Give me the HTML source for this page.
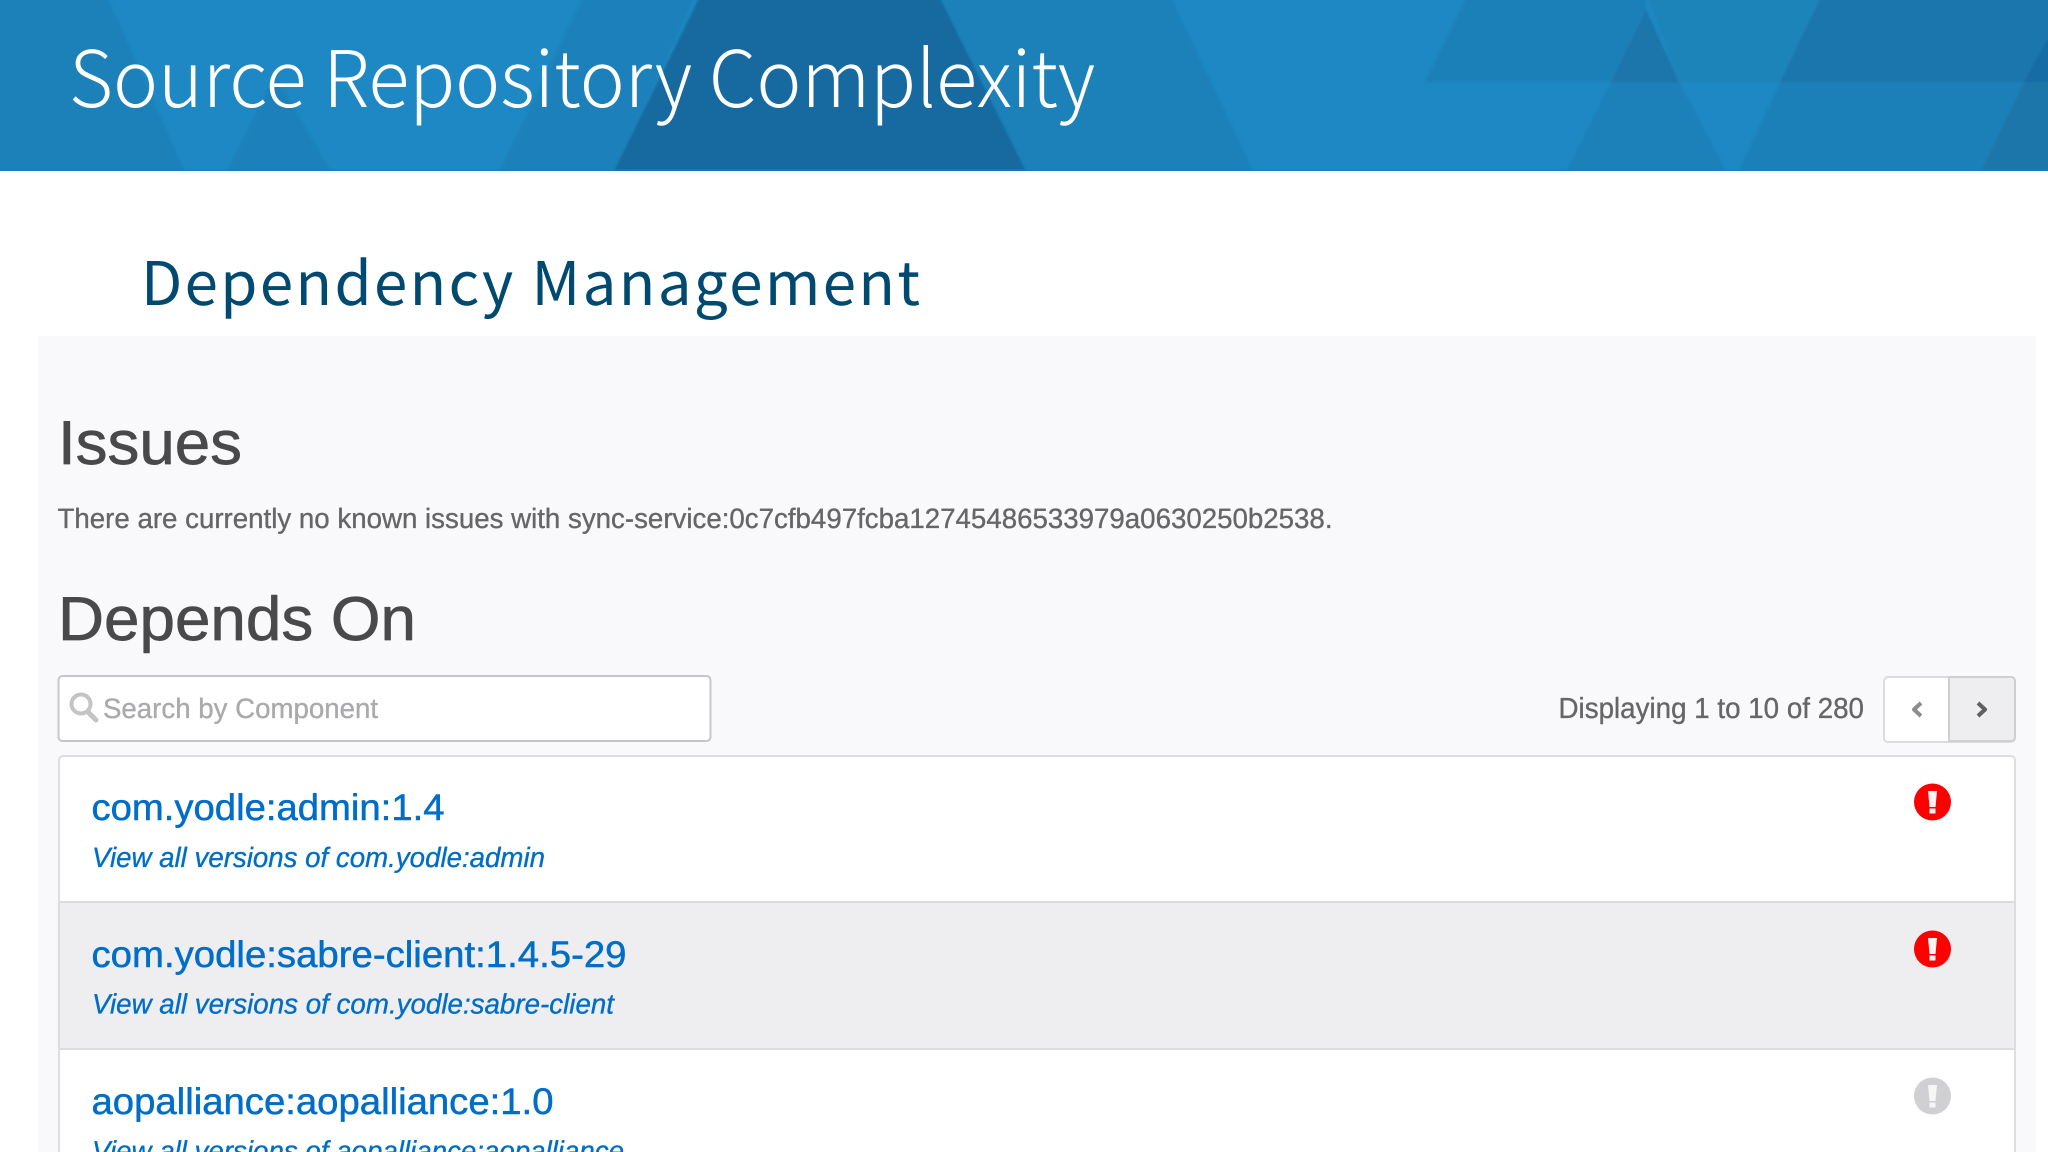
<!DOCTYPE html>
<html lang="en">
<head>
<meta charset="utf-8">
<title>Source Repository Complexity</title>
<style>
html,body{margin:0;padding:0;background:#fff;width:2048px;height:1152px;overflow:hidden}
svg{display:block;position:absolute;left:0;top:0}
text{text-rendering:geometricPrecision;white-space:pre}
.lib{font-family:"Liberation Sans",Arial,sans-serif}
.noto{font-family:"Noto Sans CJK JP","Liberation Sans",sans-serif}
</style>
</head>
<body>
<svg width="2048" height="1152" viewBox="0 0 2048 1152" xmlns="http://www.w3.org/2000/svg">
  <defs>
    <filter id="soft" filterUnits="userSpaceOnUse" x="-20" y="-20" width="2100" height="1200"><feGaussianBlur stdDeviation="1"/></filter>
    <filter id="txt" filterUnits="userSpaceOnUse" x="0" y="0" width="2048" height="1200"><feGaussianBlur stdDeviation="0.3"/></filter>
    <clipPath id="hd"><rect x="0" y="0" width="2048" height="171"/></clipPath>
  </defs>
  <!-- header -->
  <rect x="0" y="0" width="2048" height="171" fill="#1d88c3"/>
  <g clip-path="url(#hd)"><g filter="url(#soft)">
  <polygon points="-10,-10 104,-10 186,175 -10,175" fill="#1b80b9"/>
  <polygon points="225,175 275,75 333,175" fill="#1c81ba"/>
  <polygon points="586,-10 698,-10 614,175 498,175" fill="#1b81ba"/>
  <polygon points="703,-10 936,-10 1028,175 612,175" fill="#176ba0"/>
  <polygon points="936,-10 1167,-10 1255,175 1028,175" fill="#1b80b9"/>
  <polygon points="1470,-10 1646,-10 1646,10 1611,82 1425,82" fill="#1c80b8"/>
  <polygon points="1646,10 1679,82 1611,82" fill="#1a74ab"/>
  <polygon points="1611,82 1679,82 1728,175 1565,175" fill="#1b80b9"/>
  <polygon points="1645,-10 1824,-10 1780,82 1679,82" fill="#1a84b9"/>
  <polygon points="1824,-10 2058,-10 2058,20 2024,82 1780,82" fill="#1a76ae"/>
  <polygon points="2058,20 2058,82 2024,82" fill="#186ca4"/>
  <polygon points="1780,82 2024,82 1979,175 1737,175" fill="#1b80b8"/>
  <polygon points="2024,82 2058,82 2058,175 1979,175" fill="#1a76a9"/>
  </g></g>
  <rect x="0" y="169" width="2048" height="2" fill="#1c7fb0" opacity=".6"/>
  <g filter="url(#txt)">
  <text class="noto" x="69" y="107" font-size="78" font-weight="300" fill="#fff" textLength="1026" lengthAdjust="spacingAndGlyphs">Source Repository Complexity</text>

  <text class="noto" x="141" y="305" font-size="60" font-weight="400" fill="#004a70" textLength="779" lengthAdjust="spacing">Dependency Management</text>

  <!-- panel -->
  <rect x="38" y="336" width="1998" height="816" fill="#f9f8fa"/>
  <g stroke-linejoin="round">
  <text class="lib" x="58" y="464" font-size="62" fill="#4a4a4c" stroke="#4a4a4c" stroke-width=".7" textLength="184" lengthAdjust="spacingAndGlyphs">Issues</text>
  <text class="lib" x="57.5" y="528" font-size="28" fill="#666668" stroke="#666668" stroke-width=".35" textLength="1275" lengthAdjust="spacingAndGlyphs">There are currently no known issues with sync-service:0c7cfb497fcba12745486533979a0630250b2538.</text>
  <text class="lib" x="58" y="640" font-size="62" fill="#4a4a4c" stroke="#4a4a4c" stroke-width=".7" textLength="358" lengthAdjust="spacingAndGlyphs">Depends On</text>

  <!-- search -->
  <rect x="58.5" y="676" width="652" height="65" rx="4" fill="#fff" stroke="#c6c6c8" stroke-width="2"/>
  <circle cx="81" cy="704" r="9.5" fill="none" stroke="#c4c4c4" stroke-width="4"/>
  <path d="M88 712 L96 720" stroke="#c4c4c4" stroke-width="5" stroke-linecap="round"/>
  <text class="lib" x="103" y="718" font-size="28" fill="#aaaaac" stroke="#aaaaac" stroke-width=".35" textLength="275" lengthAdjust="spacingAndGlyphs">Search by Component</text>

  <!-- pager -->
  <text class="lib" x="1558.5" y="718" font-size="29" fill="#666668" stroke="#666668" stroke-width=".35" textLength="305.5" lengthAdjust="spacingAndGlyphs">Displaying 1 to 10 of 280</text>
  <rect x="1884" y="677" width="131" height="65" rx="4" fill="#fff" stroke="#dcdcde" stroke-width="2"/>
  <path d="M1949 677 H2011 a4 4 0 0 1 4 4 V737 a4 4 0 0 1 -4 4 H1949 Z" fill="#eeedef" stroke="#cfcfd1" stroke-width="2"/>
  <path d="M1921 703 L1914 709.5 L1921 716" fill="none" stroke="#8c8c8e" stroke-width="4"/>
  <path d="M1978 703 L1985 709.5 L1978 716" fill="none" stroke="#606062" stroke-width="4"/>

  <!-- list -->
  <rect x="59" y="756" width="1956" height="420" rx="4" fill="#fff" stroke="#dedee0" stroke-width="2"/>
  <rect x="59" y="902" width="1956" height="147" fill="#eeedef"/>
  <rect x="59" y="901" width="1956" height="2" fill="#dcdcde"/>
  <rect x="59" y="1048" width="1956" height="2" fill="#dcdcde"/>
  <rect x="58" y="902" width="2" height="147" fill="#dcdcde"/>
  <rect x="2014" y="902" width="2" height="147" fill="#dcdcde"/>

  <g fill="#006ec8" stroke="#006ec8">
  <text class="lib" x="91.5" y="820" font-size="37" stroke-width=".5" textLength="353" lengthAdjust="spacingAndGlyphs">com.yodle:admin:1.4</text>
  <text class="lib" x="92" y="867" font-size="28" stroke-width=".35" font-style="italic" textLength="453" lengthAdjust="spacingAndGlyphs">View all versions of com.yodle:admin</text>
  <text class="lib" x="91.5" y="967" font-size="37" stroke-width=".5" textLength="535" lengthAdjust="spacingAndGlyphs">com.yodle:sabre-client:1.4.5-29</text>
  <text class="lib" x="92" y="1013.5" font-size="28" stroke-width=".35" font-style="italic" textLength="522" lengthAdjust="spacingAndGlyphs">View all versions of com.yodle:sabre-client</text>
  <text class="lib" x="91.5" y="1114" font-size="37" stroke-width=".5" textLength="462" lengthAdjust="spacingAndGlyphs">aopalliance:aopalliance:1.0</text>
  <text class="lib" x="92" y="1160.5" font-size="28" stroke-width=".35" font-style="italic" textLength="532" lengthAdjust="spacingAndGlyphs">View all versions of aopalliance:aopalliance</text>
  </g>
  </g>

  <!-- status icons -->
  <circle cx="1932.5" cy="802" r="18.5" fill="#fe0000"/>
  <path d="M1928 791 H1937 L1935.5 807 H1929.5 Z M1929.5 808.5 H1935.5 V813.5 H1929.5 Z" fill="#fdf2f2"/>
  <circle cx="1932.5" cy="949" r="18.5" fill="#fe0000"/>
  <path d="M1928 938 H1937 L1935.5 954 H1929.5 Z M1929.5 955.5 H1935.5 V960.5 H1929.5 Z" fill="#fdf2f2"/>
  <circle cx="1932.5" cy="1096" r="18.5" fill="#d0d0d2"/>
  <path d="M1928 1085 H1937 L1935.5 1101 H1929.5 Z M1929.5 1102.5 H1935.5 V1107.5 H1929.5 Z" fill="#f6f6f6"/>
  </g>
</svg>
</body>
</html>
